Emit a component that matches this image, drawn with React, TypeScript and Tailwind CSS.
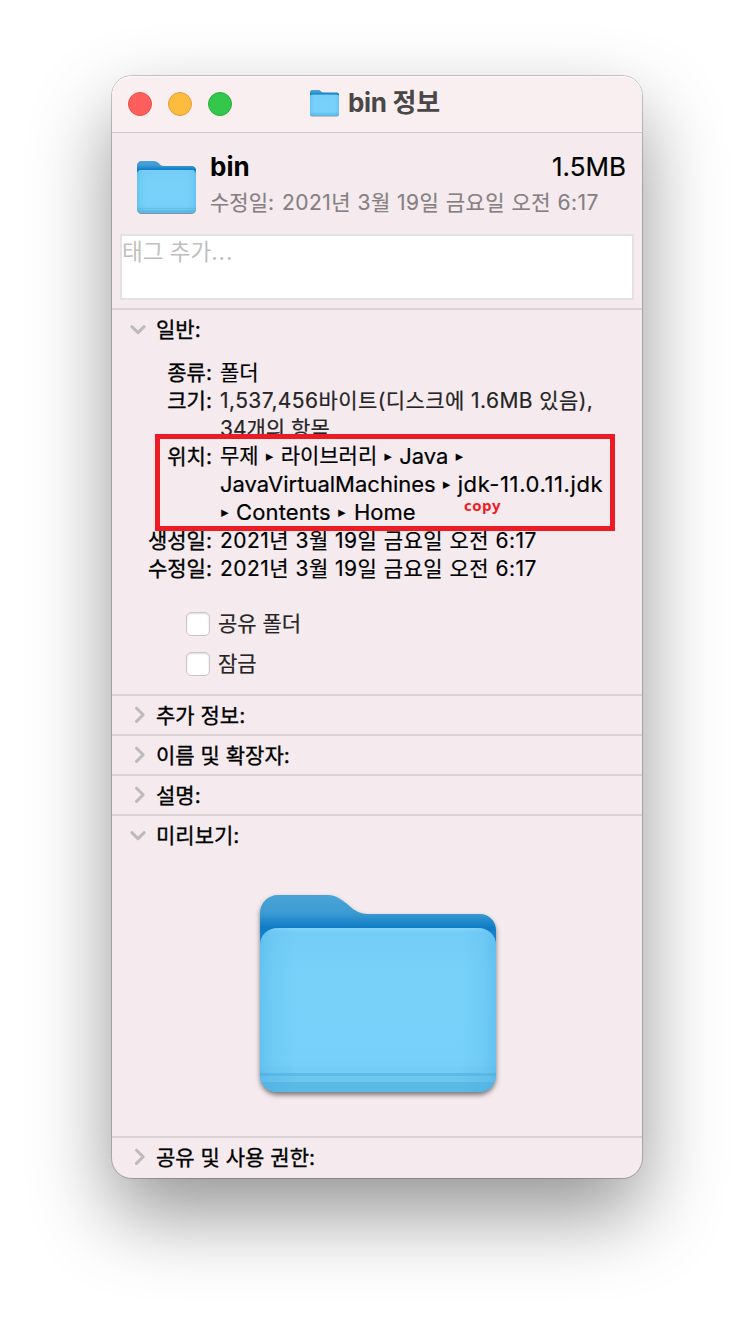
import React, { useId } from "react";

function Folder({ className }: { className: string }) {
  const id = useId();
  return (
    <svg className={className} viewBox="0 0 236 197" preserveAspectRatio="none" overflow="visible" aria-hidden="true">
      <defs>
        <linearGradient id={id + "b"} x1="0" y1="0" x2="0" y2="1">
          <stop offset="0" stopColor="#4aa3d6" />
          <stop offset="0.09" stopColor="#3c9bd2" />
          <stop offset="0.165" stopColor="#0f7cc6" />
          <stop offset="0.25" stopColor="#1c86ca" />
        </linearGradient>
        <linearGradient id={id + "f"} x1="0" y1="0" x2="0" y2="1">
          <stop offset="0" stopColor="#84d4fa" />
          <stop offset="0.03" stopColor="#74cdf7" />
          <stop offset="0.3" stopColor="#78d1f9" />
          <stop offset="0.8" stopColor="#77d0f9" />
          <stop offset="1" stopColor="#6cc8f2" />
        </linearGradient>
        <linearGradient id={id + "s"} x1="0" y1="0" x2="1" y2="0">
          <stop offset="0" stopColor="#3fa9de" stopOpacity="0.36" />
          <stop offset="0.05" stopColor="#3fa9de" stopOpacity="0.15" />
          <stop offset="0.15" stopColor="#3fa9de" stopOpacity="0" />
          <stop offset="0.85" stopColor="#3fa9de" stopOpacity="0" />
          <stop offset="0.95" stopColor="#3fa9de" stopOpacity="0.15" />
          <stop offset="1" stopColor="#3fa9de" stopOpacity="0.36" />
        </linearGradient>
        <clipPath id={id + "c"}>
          <path d="M0 50C0 40 8 33 18 33H218C228 33 236 40 236 50V179C236 190 228 197 218 197H18C8 197 0 190 0 179Z" />
        </clipPath>
        <filter id={id + "d"} x="-10%" y="-10%" width="120%" height="125%">
          <feDropShadow dx="0" dy="3" stdDeviation="2.6" floodColor="#000" floodOpacity="0.5" />
        </filter>
      </defs>
      <g filter={`url(#${id}d)`}>
        <path
          d="M0 18C0 8 8 0 18 0H68C76 0 80 4 86 8L93 14C99 18 103 19 110 19H220C229 19 236 26 236 35V179C236 190 228 197 218 197H18C8 197 0 190 0 179Z"
          fill={`url(#${id}b)`}
        />
      </g>
      <g clipPath={`url(#${id}c)`}>
        <path d="M0 33H236V197H0Z" fill={`url(#${id}f)`} />
        <path d="M0 172H236V178H0Z" fill="#74cbf3" />
        <path d="M0 178H236V181H0Z" fill="#5cbae6" />
        <path d="M0 181H236V187H0Z" fill="#6cc6ee" />
        <path d="M0 187H236V197H0Z" fill="#59b9e7" />
        <path d="M0 33H236V197H0Z" fill={`url(#${id}s)`} />
      </g>
    </svg>
  );
}

function Chevron({ open }: { open?: boolean }) {
  return (
    <svg className="h-[20px] w-[20px] shrink-0" viewBox="0 0 20 20" fill="none" stroke="#bdbabb" strokeWidth="3" strokeLinecap="round" strokeLinejoin="round">
      <path d={open ? "M3.800 7.700L10 13.700L16.200 7.700" : "M8.500 3.200L15.200 9.800L8.500 16.400"} />
    </svg>
  );
}

function Section({ title, open, className = "", children }: { title: string; open?: boolean; className?: string; children?: React.ReactNode }) {
  return (
    <section className={"border-t-2 border-[#dad3d6] " + className}>
      <div className="flex h-[38px] items-center pl-[16px]">
        <Chevron open={open} />
        <h2 className="ml-[8px] pt-[2px] leading-[38px] [-webkit-text-stroke:0.35px_#000]">{title}</h2>
      </div>
      {children}
    </section>
  );
}

function Row({ label, children }: { label: string; children: React.ReactNode }) {
  return (
    <div className="flex leading-[28px]">
      <div className="w-[100px] shrink-0 text-right [-webkit-text-stroke:0.35px_#000]">{label}</div>
      <div className="ml-[8px] whitespace-nowrap">{children}</div>
    </div>
  );
}

function Arrow({ className = "" }: { className?: string }) {
  return <span className={"inline-block w-[8px] text-center font-['DejaVu_Sans',sans-serif] text-[14.5px] leading-[29px] " + className}>▸</span>;
}

function Check({ label }: { label: string }) {
  return (
    <label className="flex h-[40px] items-center gap-[8px] pl-[74px] text-[#262425] [-webkit-text-stroke:0.2px_#262425]">
      <span className="h-[24px] w-[24px] rounded-[5px] border border-[#cbc5c7] bg-white shadow-[inset_0_1px_2px_rgba(0,0,0,0.14)]" />
      {label}
    </label>
  );
}

export default function App() {
  return (
    <main className="flex h-[1326px] w-[754px] justify-center overflow-hidden bg-white pt-[76px] font-['Inter','Noto_Sans_CJK_KR',sans-serif] text-[21px] text-black">
      <div className="relative h-[1102px] w-[530px] rounded-[20px] bg-[#f5ebef] shadow-[0_0_0_1px_rgba(0,0,0,0.2),0_36px_80px_rgba(0,0,0,0.42)]">
        <header className="flex h-[57px] items-center rounded-t-[20px] border-b border-[#cfc6c9] bg-[#f9eef0] pl-[16px] shadow-[inset_0_1px_0_#fff8f9]">
          <div className="flex gap-[16px]">
            <span className="h-[24px] w-[24px] rounded-full border border-[#e2504d] bg-[#fe5f5c]" />
            <span className="h-[24px] w-[24px] rounded-full border border-[#e0a038] bg-[#fdbc40]" />
            <span className="h-[24px] w-[24px] rounded-full border border-[#2caa3b] bg-[#34c84a]" />
          </div>
          <Folder className="mt-[-3px] ml-[77.500px] h-[26px] w-[29px]" />
          <h1 className="ml-[9.500px] pb-[3px] text-[26px] leading-[40px] font-bold tracking-[-0.3px] text-[#4a4748]">bin 정보</h1>
        </header>

        <div className="h-[175px]">
          <div className="flex h-[101px] pl-[24.500px]">
            <Folder className="mt-[28px] h-[52px] w-[59px]" />
            <div className="ml-[14.500px] flex-1 pt-[18px] pr-[16px]">
              <div className="flex justify-between text-[26px] leading-[32px]">
                <span className="font-bold">bin</span>
                <span className="[-webkit-text-stroke:0.2px_#000]">1.5MB</span>
              </div>
              <div className="mt-[4px] flex leading-[32px] text-[#858082] [-webkit-text-stroke:0.15px_#858082]">
                <span>수정일:</span>
                <span className="ml-[8px] tracking-[0.47px]">2021년 3월 19일 금요일 오전 6:17</span>
              </div>
            </div>
          </div>
          <div className="mx-[8px] h-[66px] border-2 border-[#e4e1e2] bg-white text-[22.5px] leading-[31px] text-[#bfbfbf]">
            태그 추가<span className="tracking-[1px]">...</span>
          </div>
        </div>

        <Section title="일반:" open className="h-[386px]">
          <div className="pt-[11px] [-webkit-text-stroke:0.2px]">
            <Row label="종류:">폴더</Row>
            <Row label="크기:">
              <span className="tracking-[0.42px] text-[#262425]">1,537,456바이트(디스크에 1.6MB 있음),</span>
              <br />
              <span className="text-[#262425]">34개의 항목</span>
            </Row>
            <Row label="위치:">
              <div className="-mt-px h-[85px]">
                <div className="flex h-[28px]">
                  <span>무제</span>
                  <Arrow className="ml-[7px]" />
                  <span className="ml-[7px]">라이브러리</span>
                  <Arrow className="ml-[7px]" />
                  <span className="ml-[7px] text-[22px]">Java</span>
                  <Arrow className="ml-[7px]" />
                </div>
                <div className="flex h-[28px] text-[22px]">
                  <span>JavaVirtualMachines</span>
                  <Arrow className="ml-[7px]" />
                  <span className="ml-[7px] tracking-[0.6px]">jdk-11.0.11.jdk</span>
                </div>
                <div className="flex h-[28px] text-[22px]">
                  <Arrow className="ml-[1px]" />
                  <span className="ml-[7px] tracking-[0.15px]">Contents</span>
                  <Arrow className="ml-[7px]" />
                  <span className="ml-[8px]">Home</span>
                </div>
              </div>
            </Row>
            <Row label="생성일:"><span className="tracking-[0.47px]">2021년 3월 19일 금요일 오전 6:17</span></Row>
            <Row label="수정일:"><span className="tracking-[0.47px]">2021년 3월 19일 금요일 오전 6:17</span></Row>
          </div>
          <div className="pt-[21px]">
            <Check label="공유 폴더" />
            <Check label="잠금" />
          </div>
        </Section>
        <Section title="추가 정보:" />
        <Section title="이름 및 확장자:" />
        <Section title="설명:" />
        <Section title="미리보기:" open className="h-[322px]">
          <div className="pt-[41px] pl-[148px]">
            <Folder className="h-[197px] w-[236px]" />
          </div>
        </Section>
        <Section title="공유 및 사용 권한:" />

        <div className="absolute top-[358px] left-[43px] h-[97px] w-[460px] border-5 border-[#ed1c24]" />
        <span className="absolute top-[418px] left-[352px] font-['Open_Sans',sans-serif] text-[15px] leading-[22px] font-bold tracking-[0.5px] text-[#ed1c24]">copy</span>
      </div>
    </main>
  );
}
